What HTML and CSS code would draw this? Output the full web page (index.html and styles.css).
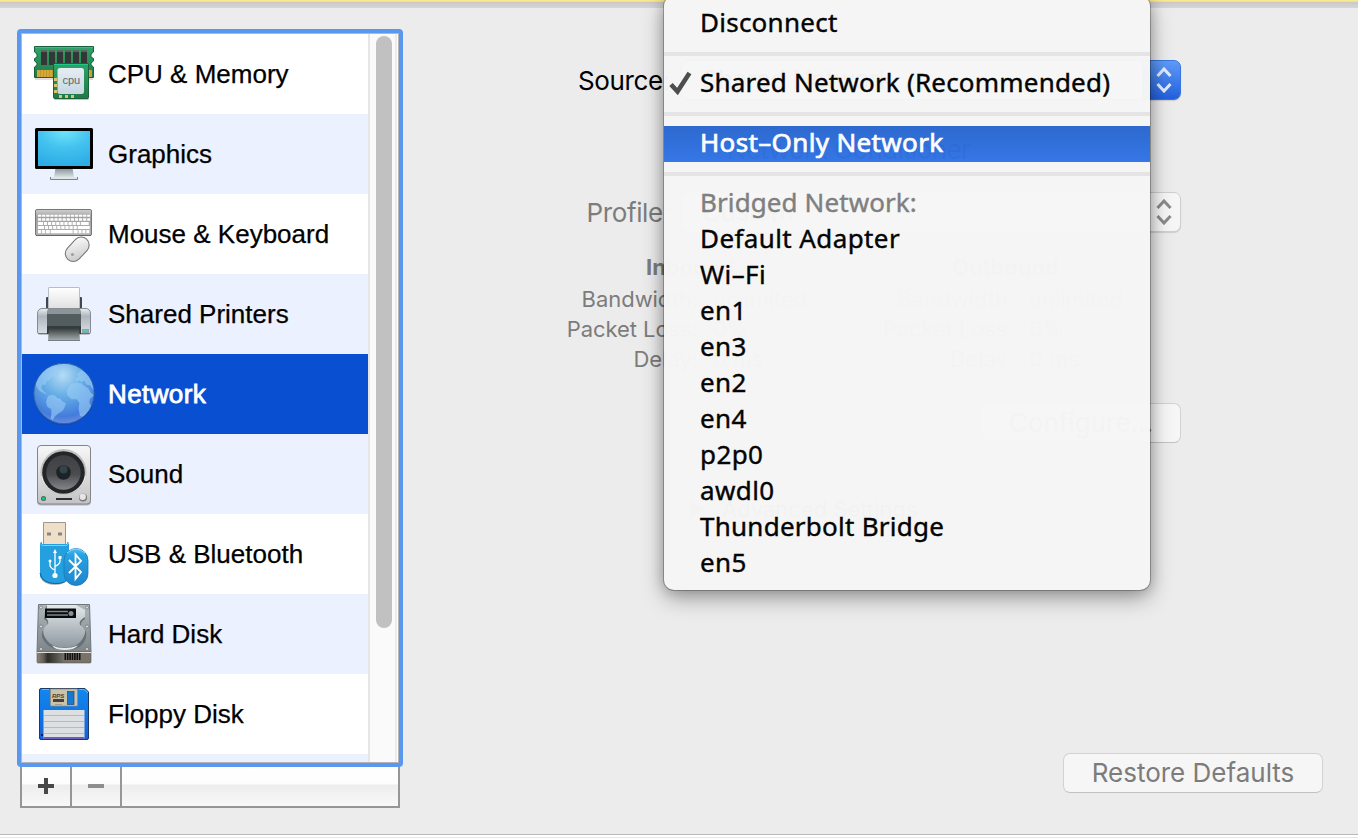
FILE: index.html
```html
<!DOCTYPE html>
<html lang="en">
<head>
<meta charset="utf-8">
<title>Hardware settings</title>
<link rel="stylesheet" href="styles.css">
</head>
<body>
<div class="window">
  <div class="banner-edge"></div>
  <div class="content">
    <aside class="sidebar">
      <div class="list-frame">
        <ul class="devices">
          <li class="device">
            <svg class="icon" viewBox="32 42 64 64">
              <defs>
                <linearGradient id="pcb" x1="0" y1="0" x2="0" y2="1"><stop offset="0" stop-color="#2fa468"/><stop offset="1" stop-color="#227849"/></linearGradient>
                <linearGradient id="chip" x1="0" y1="0" x2="0" y2="1"><stop offset="0" stop-color="#e6edf3"/><stop offset="1" stop-color="#c6d8e3"/></linearGradient>
              </defs>
              <path d="M35 79H93" stroke="#bbb" stroke-width="1"/>
              <path d="M34.5 46.500H93.500V52L91 54V57L93.500 58.500V61L91 63V65L93.500 67V77.500H34.500V67L37 65V63L34.500 61V58.500L37 57V54L34.500 52Z" fill="url(#pcb)" stroke="#17633c"/>
              <path d="M35 47.500H93" stroke="#21c887"/>
              <path d="M37 70H92V77H37Z" fill="#d6a936"/>
              <path d="M40.500 70V77M43.500 70V77M46.500 70V77M49.500 70V77M52.500 70V77M91 70V77" stroke="#a88c35" stroke-width=".6"/>
              <path d="M41 50h6v15h-6zM49 50h6v15h-6zM57 50h6v15h-6zM65 50h6v15h-6zM73 50h6v15h-6zM81 50h6v15h-6z" fill="#343638"/>
              <path d="M41 51h6M49 51h6M57 51h6M65 51h6M73 51h6M81 51h6" stroke="#707370" stroke-width="1.500"/>
              <rect x="54" y="65" width="35" height="35" rx="1.500" fill="#888" opacity=".5"/>
              <rect x="53.500" y="63.500" width="35" height="35" rx="1.500" fill="url(#pcb)" stroke="#17633c"/>
              <path d="M54 64.500H88" stroke="#21c887"/>
              <rect x="57.500" y="68" width="26.500" height="26" rx="2.500" fill="url(#chip)"/>
              <path d="M54 78h3v3h-3zM54 84h3v3h-3zM54 90h3v3h-3zM59 95h3v3h-3zM65 95h3v3h-3zM71 95h3v3h-3z" fill="#d8c66b"/>
              <text x="71.300" y="83.500" class="chip-text">cpu</text>
            </svg>
            <span>CPU &amp; Memory</span>
          </li>
          <li class="device">
            <svg class="icon" viewBox="32 122 64 64">
              <defs>
                <radialGradient id="screen" cx=".52" cy="0" r="1"><stop offset="0" stop-color="#6de5f8"/><stop offset=".5" stop-color="#43c1ef"/><stop offset="1" stop-color="#2dade5"/></radialGradient>
                <linearGradient id="stand" x1="0" y1="0" x2="0" y2="1"><stop offset="0" stop-color="#84908f"/><stop offset="1" stop-color="#dce4e8"/></linearGradient>
              </defs>
              <path d="M55.500 168H72.500L74 177.500H54Z" fill="url(#stand)"/>
              <path d="M50 177H78V180H50Z" fill="#dfe5e9"/>
              <path d="M50.500 177V179.500H77.500V177" fill="none" stroke="#7d8489"/>
              <rect x="35" y="128" width="58" height="41" rx="1.500"/>
              <rect x="38" y="131" width="52" height="35" fill="url(#screen)"/>
            </svg>
            <span>Graphics</span>
          </li>
          <li class="device">
            <svg class="icon" viewBox="32 202 64 64">
              <defs>
                <linearGradient id="kb" x1="0" y1="0" x2="0" y2="1"><stop offset="0" stop-color="#cfcfcf"/><stop offset=".3" stop-color="#a2a2a2"/><stop offset="1" stop-color="#b2b2b2"/></linearGradient>
                <linearGradient id="mouse" x1="0" y1="0" x2="1" y2="1"><stop offset="0" stop-color="#fff"/><stop offset="1" stop-color="#c5c5c5"/></linearGradient>
              </defs>
              <rect x="35.500" y="209.500" width="56" height="26" rx="1.500" fill="url(#kb)" stroke="#777"/>
              <path d="M36 235.500H91" stroke="#666"/>
              <g stroke="#fff" fill="none">
                <path d="M38 215.700H90" stroke-width="2" stroke-dasharray="3.300 .8"/>
                <path d="M38 219.500H90" stroke-width="2.600" stroke-dasharray="3.200 .9"/>
                <path d="M38 223.500H90" stroke-width="2.800" stroke-dasharray="5 .9 3.200 .9 3.200 .9 3.200 .9 3.200 .9 3.200 .9 3.200 .9 3.200 .9 3.200 .9 3.200 .9 8"/>
                <path d="M38 227.500H90" stroke-width="2.800" stroke-dasharray="6 .9 3.200 .9 3.200 .9 3.200 .9 3.200 .9 3.200 .9 3.200 .9 3.200 .9 3.200 .9 12"/>
                <path d="M38 231.700H90" stroke-width="3.200" stroke-dasharray="3 .9 3 .9 4 .9 22 .9 4 .9 3 .9 3 .9 3 1"/>
              </g>
              <rect x="69.200" y="235.500" width="16" height="27.500" rx="8" transform="rotate(43 77.200 249.300)" fill="url(#mouse)" stroke="#777" stroke-width="1.100"/>
              <circle cx="72.500" cy="254.500" r="1.600" fill="#a0a0a0"/>
            </svg>
            <span>Mouse &amp; Keyboard</span>
          </li>
          <li class="device">
            <svg class="icon" viewBox="32 282 64 64">
              <defs>
                <linearGradient id="pr" x1="0" y1="0" x2="0" y2="1"><stop offset="0" stop-color="#eef0f3"/><stop offset=".3" stop-color="#aeb6bd"/><stop offset="1" stop-color="#dde0e5"/></linearGradient>
                <linearGradient id="tray" x1="0" y1="0" x2="0" y2="1"><stop offset="0" stop-color="#343a3a"/><stop offset="1" stop-color="#aab3b6"/></linearGradient>
                <linearGradient id="paper" x1="0" y1="0" x2="0" y2="1"><stop offset="0" stop-color="#fff"/><stop offset="1" stop-color="#dedede"/></linearGradient>
              </defs>
              <path d="M46 298Q46 297 47 297H81Q82 297 82 298V310H46Z" fill="#40484c"/>
              <rect x="48.500" y="287.500" width="31" height="23" rx=".5" fill="url(#paper)" stroke="#b9bec4"/>
              <path d="M42 308.500H86Q90.500 309 90.500 314V332Q90.500 334 88.500 334H39.500Q37.500 334 37.500 332V314Q37.500 309 42 308.500Z" fill="url(#pr)" stroke="#858c93"/>
              <path d="M38 333.500H90" stroke="#727679"/>
              <path d="M48 309H80L81 314V326H47V314Z" fill="#535d60"/>
              <path d="M48 309H80L81 314H47Z" fill="#8b9699"/>
              <path d="M47 326H81V334H47Z" fill="#353b3c"/>
              <path d="M49 328H79L80 341H48Z" fill="url(#tray)"/>
              <path d="M48 340.500H80" stroke="#777f81"/>
              <path d="M82 329H89V333H82Z" fill="#8fa0a8"/><circle cx="84.300" cy="331" r="1.200" fill="#2fe5a3"/><circle cx="87.300" cy="331" r="1" fill="#5bc1ee"/>
            </svg>
            <span>Shared Printers</span>
          </li>
          <li class="device selected">
            <svg class="icon" viewBox="32 362 64 64">
              <defs>
                <radialGradient id="sea" cx=".48" cy=".2" r=".85"><stop offset="0" stop-color="#b7dcf5"/><stop offset=".4" stop-color="#67aee6"/><stop offset=".8" stop-color="#447ddc"/><stop offset="1" stop-color="#7d92e4"/></radialGradient>
                <clipPath id="disc"><circle cx="64" cy="393.500" r="30"/></clipPath>
              </defs>
              <circle cx="64" cy="394.500" r="30.500" fill="#173d8a" opacity=".5"/>
              <circle cx="64" cy="393.500" r="30.200" fill="url(#sea)" stroke="#2c62a6"/>
              <g clip-path="url(#disc)"><g transform="translate(20 350) scale(.33333)" fill="#9bcdf7" opacity=".6">
                <path d="M58 62L82 50L108 46L116 52L110 62L118 74L106 84L98 78L88 90L80 94L76 104L66 104L64 114L70 122L82 134L76 132L58 122L46 104L54 84L60 76Z"/>
                <path d="M84 138L94 134L104 136L112 144L122 146L126 154L138 160L134 172L128 182L116 190L104 200L98 210L92 206L94 192L94 178L82 170L78 156Z"/>
                <path d="M146 112L154 102L168 98L184 100L190 106L206 116L212 128L222 136L210 146L208 158L214 168L206 188L192 202L180 198L176 178L178 158L170 148L154 148L142 136L140 122Z"/>
                <path d="M166 88L176 80L172 72L184 60L204 74L218 96L222 122L210 106L200 104L194 92L184 96L178 90L170 96Z"/>
              </g></g>
            </svg>
            <span>Network</span>
          </li>
          <li class="device">
            <svg class="icon" viewBox="32 442 64 64">
              <defs>
                <linearGradient id="box" x1="0" y1="0" x2="0" y2="1"><stop offset="0" stop-color="#f7f7f7"/><stop offset="1" stop-color="#c3c3c5"/></linearGradient>
                <linearGradient id="cone" x1="0" y1="0" x2="0" y2="1"><stop offset="0" stop-color="#3f4044"/><stop offset=".55" stop-color="#4a4b4f"/><stop offset="1" stop-color="#85868a"/></linearGradient>
              </defs>
              <rect x="37" y="446.500" width="54" height="59" rx="4" fill="#777" opacity=".5"/>
              <rect x="37.500" y="445.500" width="53" height="58.500" rx="3.500" fill="url(#box)" stroke="#858588"/>
              <circle cx="63.500" cy="472" r="23" fill="#bfc0c1"/><path d="M41 476a23 23 0 0 0 45 0" fill="#ececec"/>
              <circle cx="63.500" cy="472.500" r="21.300" fill="#242528"/>
              <circle cx="63.500" cy="472.500" r="17.200" fill="url(#cone)"/>
              <circle cx="63.500" cy="472.500" r="7.300" fill="#1f2225"/><circle cx="63.500" cy="469.500" r="4" fill="#34424b"/>
              <circle cx="43.500" cy="498.500" r="2.500" fill="#48675a"/><circle cx="43.500" cy="498.500" r="1.500" fill="#05d67c"/>
              <path d="M56 499H72" stroke="#2d2e30" stroke-width="2"/>
              <circle cx="83" cy="497.500" r="4" fill="#777"/><circle cx="82.700" cy="496.800" r="3.200" fill="#e5e5e5"/>
            </svg>
            <span>Sound</span>
          </li>
          <li class="device">
            <svg class="icon" viewBox="32 522 64 64">
              <defs>
                <linearGradient id="blue" x1="0" y1="0" x2="0" y2="1"><stop offset="0" stop-color="#4cbaf0"/><stop offset=".2" stop-color="#27a0e0"/><stop offset="1" stop-color="#1d86cf"/></linearGradient>
              </defs>
              <path d="M40 545H69V577Q66 585 55 585T40 577Z" fill="#666" opacity=".5"/>
              <path d="M43.500 522.500H65.500V547H43.500Z" fill="#efdfc8" stroke="#9b978f"/>
              <path d="M47 532.500h4v3h-4zM58 532.500h4v3h-4z" fill="#858585"/>
              <path d="M40 544Q40 542 42 542V544H67V542Q69 542 69 544V576Q66 584 54.500 584T40 576Z" fill="#24a0e0"/>
              <path d="M40.500 544Q42 546.500 45 545.500H64Q67 546.500 68.500 543" fill="none" stroke="#6ed7fa"/>
              <path d="M40 573Q42 583 54.500 583.500T68 577" fill="none" stroke="#155f98"/>
              <g stroke="#fff" stroke-width="1.300" fill="none"><path d="M55 551V575M50 561V565Q50 568 55 570M60 557V561Q60 564 55 566.500"/></g>
              <path d="M55 549l2 4h-4zM58.500 556h3v3h-3z" fill="#fff"/><circle cx="50" cy="561" r="1.500" fill="#fff"/><circle cx="55" cy="575.500" r="2.600" fill="#fff"/>
              <rect x="64" y="548.500" width="24" height="37" rx="12" fill="url(#blue)" stroke="#1878b8" stroke-width=".8"/>
              <path d="M67 553Q76 545 85 553" fill="none" stroke="#83e0fd"/>
              <path d="M69 560L81 572L75.500 579V554.500L81 561L69 573" fill="none" stroke="#fff" stroke-width="1.800"/>
            </svg>
            <span>USB &amp; Bluetooth</span>
          </li>
          <li class="device">
            <svg class="icon" viewBox="32 602 64 64">
              <defs>
                <linearGradient id="metal" x1="0" y1="0" x2="0" y2="1"><stop offset="0" stop-color="#b1b7b9"/><stop offset="1" stop-color="#7d8589"/></linearGradient>
                <linearGradient id="platter" x1="0" y1="0" x2="0" y2="1"><stop offset="0" stop-color="#e4e9eb"/><stop offset=".5" stop-color="#b9c1c6"/><stop offset="1" stop-color="#8f989f"/></linearGradient>
                <linearGradient id="base" x1="0" y1="0" x2="1" y2="0"><stop offset="0" stop-color="#8b847b"/><stop offset=".12" stop-color="#645e57"/><stop offset=".2" stop-color="#2c2c2a"/><stop offset=".5" stop-color="#77716a"/><stop offset="1" stop-color="#79736b"/></linearGradient>
              </defs>
              <path d="M38.500 604.500H89.500L91 652H37Z" fill="url(#metal)" stroke="#70777a"/>
              <path d="M37 652H91V662Q91 663 90 663H38Q37 663 37 662Z" fill="url(#base)" stroke="#5c5852" stroke-width=".6"/>
              <path d="M37 652.500H91" stroke="#e4dfd5"/>
              <path d="M64.500 656.500H81" stroke="#111" stroke-width="7" stroke-dasharray="1.600 .8"/>
              <path d="M46 606H77L85 612V619Q80 622 81 626Q88 630 86 638C83 647 76 650 65 650S46 647 42 637Q41 630 47 626Q49 622 44 619Z" fill="#687177"/>
              <path d="M47 605H76L85 610V617Q78 621 80 625Q87 629 84.500 635C81 644 74 647.500 64.500 647.500S47 644 43.500 634Q42 628 48 624Q49 621 46 618Z" fill="url(#platter)"/>
              <path d="M52 645.500Q64 650.500 78 645.500Q74 650 64.500 650T52 645.500Z" fill="#e4e9eb"/>
              <rect x="45" y="608.500" width="31" height="9.500" rx=".5" fill="#080b0d"/>
              <path d="M47 611.500H68M47 615H68" stroke="#80868a" stroke-width="1.300"/><circle cx="71" cy="613.500" r="2.500" fill="#888e92"/>
              <g fill="#d9dcdd" stroke="#62686b" stroke-width=".6"><circle cx="41" cy="607.500" r="1.500"/><circle cx="87" cy="607.500" r="1.500"/><circle cx="41" cy="626.500" r="1.500"/><circle cx="87" cy="626.500" r="1.500"/><circle cx="41" cy="649" r="1.500"/><circle cx="87" cy="649" r="1.500"/></g>
            </svg>
            <span>Hard Disk</span>
          </li>
          <li class="device">
            <svg class="icon" viewBox="32 682 64 64">
              <defs><linearGradient id="flop" x1="0" y1="0" x2="0" y2="1"><stop offset="0" stop-color="#1188ee"/><stop offset="1" stop-color="#1561db"/></linearGradient></defs>
              <path d="M41 688.500H85L88.500 692V738Q88.500 739.500 87 739.500H41Q39.500 739.500 39.500 738V690Q39.500 688.500 41 688.500Z" fill="url(#flop)" stroke="#1e3866"/>
              <path d="M42 689.500H49M79 689.500H84L88 693" fill="none" stroke="#43c5f9"/>
              <path d="M50.500 689H77.500V706H50.500Z" fill="#cbc2a9" stroke="#958c74" stroke-width=".7"/>
              <rect x="67.500" y="691.500" width="6.500" height="13" fill="#1878d0" stroke="#0f4c93" stroke-width=".7"/>
              <text x="52" y="697.500" class="floppy-text">RPS</text>
              <path d="M53 700.500H64" stroke="#4a4034" stroke-width="3"/><path d="M55 704.500H62" stroke="#958c74" stroke-width=".7"/>
              <path d="M43.500 710H84.500V739H43.500Z" fill="#dce0e2"/>
              <path d="M44 715.500H84M44 721.500H84M44 727.500H84M44 733.500H84" stroke="#b5b8cb"/>
              <path d="M43.500 738H84.500" stroke="#6b5dc0" stroke-width="2"/><path d="M41 734h2v2h-2z" fill="#071a3d"/>
            </svg>
            <span>Floppy Disk</span>
          </li>
          <li class="device"></li>
        </ul>
        <div class="scrollbar"><div class="thumb"></div></div>
      </div>
      <div class="toolbar">
        <div class="tool"><svg width="16" height="16"><path d="M0 8H16M8 0V16" stroke="#484848" stroke-width="4"/></svg></div>
        <div class="tool"><svg width="16" height="16"><path d="M0 8H16" stroke="#8d8d8d" stroke-width="4"/></svg></div>
      </div>
    </aside>

    <main class="pane">
      <div class="field source">
        <label>Source:</label>
        <div class="select active"><span>Shared Network</span>
          <svg class="arrows" width="16" height="26"><path d="M1.500 9L8 2L14.500 9M1.500 17L8 24L14.500 17"/></svg></div>
      </div>
      <div class="conditioner">Network Conditioner</div>
      <div class="field profile">
        <label>Profile:</label>
        <div class="select"><span>Custom</span>
          <svg class="arrows" width="16" height="26"><path d="M1.500 9L8 2L14.500 9M1.500 17L8 24L14.500 17"/></svg></div>
      </div>
      <div class="limits">
        <div class="limit-group">
          <b>Inbound</b>
          <span class="key">Bandwidth:</span><span>unlimited</span>
          <span class="key">Packet Loss:</span><span>0%</span>
          <span class="key">Delay:</span><span>0 ms</span>
        </div>
        <div class="limit-group">
          <b>Outbound</b>
          <span class="key">Bandwidth:</span><span>unlimited</span>
          <span class="key">Packet Loss:</span><span>0%</span>
          <span class="key">Delay:</span><span>0 ms</span>
        </div>
      </div>
      <div class="button configure">Configure…</div>
      <div class="advanced"><svg width="16" height="18"><path d="M0 0L16 9L0 18Z" fill="#777"/></svg>Advanced Settings</div>
      <div class="button restore">Restore Defaults</div>
    </main>
  </div>
  <div class="bottom-edge"></div>

  <ul class="menu">
    <li class="item">Disconnect</li>
    <li class="rule"></li>
    <li class="item checked"><svg class="check" width="24" height="24"><path d="M3 13.500L9.500 20.500L21.500 2" fill="none" stroke="#4b4b4b" stroke-width="4.600"/></svg>Shared Network (Recommended)</li>
    <li class="rule"></li>
    <li class="item highlighted">Host–Only Network</li>
    <li class="rule"></li>
    <li class="item heading">Bridged Network:</li>
    <li class="item adapter">Default Adapter</li>
    <li class="item adapter">Wi–Fi</li>
    <li class="item adapter">en1</li>
    <li class="item adapter">en3</li>
    <li class="item adapter">en2</li>
    <li class="item adapter">en4</li>
    <li class="item adapter">p2p0</li>
    <li class="item adapter">awdl0</li>
    <li class="item">Thunderbolt Bridge</li>
    <li class="item adapter">en5</li>
  </ul>
</div>
</body>
</html>
```
FILE: styles.css
```css
* { box-sizing: border-box; }
body { margin: 0; background: #ececec; }
ul { list-style: none; margin: 0; padding: 0; }
svg { display: block; }

.window {
  position: relative;
  width: 1358px;
  height: 838px;
  overflow: hidden;
  display: flex;
  flex-direction: column;
}
.banner-edge {
  flex: none;
  height: 8px;
  background: linear-gradient(#fbe98c 0 1px, #f3e08a 1px 2px, #c9c9c9 2px, #d6d6d6 8px);
}
.content { flex: 1; display: flex; min-height: 0; }
.bottom-edge {
  flex: none;
  height: 4px;
  background: linear-gradient(#b9b9b9 0 1px, #fff 1px 3px, #e6e6e6 3px);
}

/* Device list */
.sidebar { flex: none; width: 403px; padding: 21px 0 0 17px; }
.list-frame {
  display: flex;
  width: 386px;
  height: 738px;
  border: 4px solid #5a98ef;
  border-radius: 4px;
  background: #fff;
  box-shadow: inset 1px 1px 0 #b4b9c1, inset -1px -1px 0 #b4b4b8;
  padding: 1px 2px 1px 1px;
}
.devices { width: 346px; overflow: hidden; }
.device {
  display: flex;
  align-items: center;
  gap: 12px;
  height: 80px;
  padding-left: 10px;
  font: 26px/30px "Liberation Sans", Arial, sans-serif;
  color: #000;
  -webkit-text-stroke: .25px;
}
.device:nth-child(even) { background: #ebf1fe; }
.device.selected { background: #0850d1; color: #fff; letter-spacing: .4px; -webkit-text-stroke: .8px; }
.icon { flex: none; width: 64px; height: 64px; letter-spacing: 0; -webkit-text-stroke: 0; }
.chip-text { font: 11px "Liberation Sans", sans-serif; fill: #596a70; text-anchor: middle; }
.floppy-text { font: italic bold 6px "Liberation Sans", sans-serif; fill: #4a4034; }
.scrollbar {
  flex: 1;
  padding: 2px 0 0 6px;
  background: #fafafa;
  border-left: 2px solid #e6e6e6;
  border-right: 2px solid #ebebeb;
}
.thumb { width: 16px; height: 592px; border-radius: 8px; background: #c1c1c1; }
.toolbar {
  display: flex;
  width: 380px;
  height: 41px;
  margin-left: 3px;
  border: 2px solid #969696;
  border-top: 0;
  background: linear-gradient(#fff 0, #fdfdfd 17px, #ededed 18px, #f8f8f8 39px);
}
.tool { width: 50px; padding: 11px 0 0 16px; border-right: 2px solid #969696; }

/* Settings pane */
.pane {
  flex: 1;
  display: flex;
  flex-direction: column;
  padding: 52px 35px 41px 0;
  font: 26px/40px Inter, sans-serif;
  letter-spacing: -.6px;
  color: #7c7c7c;
}
.field { display: flex; gap: 11px; height: 40px; }
.field label { width: 267px; text-align: right; line-height: 42px; letter-spacing: -.35px; }
.source label { color: #000; }
.select {
  display: flex;
  justify-content: space-between;
  align-items: center;
  width: 500px;
  padding: 0 8px 0 20px;
  border: 1px solid #cfcfcf;
  border-radius: 7px;
  background: #f6f6f6;
  box-shadow: 0 1px 1px #0002;
}
.select.active { color: #000; background: linear-gradient(90deg, #fff 460px, #0000 460px), linear-gradient(#5f9bf7, #2260dc); border-color: #3674e0; }
.arrows { fill: none; stroke: #8a8a8a; stroke-width: 3; }
.active .arrows { stroke: #e3ecff; }
.conditioner { height: 40px; margin: 30px 0 22px 324px; color: #000; }
.limits { display: flex; margin-top: 20px; font-size: 22px; line-height: 30px; letter-spacing: -.05px; }
.limit-group { display: grid; grid-template-columns: 295px auto; column-gap: 15px; align-content: start; width: 316px; }
.limit-group b { grid-column: 1 / -1; height: 32px; padding-left: 243px; }
.limit-group + .limit-group b { padding-left: 233px; }
.key { text-align: right; }
.button {
  height: 40px;
  border: 1px solid #d2d2d2;
  border-bottom-color: #c2c2c2;
  border-radius: 7px;
  background: #f6f6f6;
  text-align: center;
  line-height: 38px;
  letter-spacing: 0;
}
.configure { width: 200px; margin: 29px 0 0 578px; }
.advanced { display: flex; align-items: center; gap: 16px; margin: 46px 0 0 287px; font-size: 22px; letter-spacing: 0; color: #333; }
.restore { width: 260px; margin: auto 0 0 auto; }

/* Source pop-up */
.menu {
  position: absolute;
  left: 664px;
  top: -4px;
  width: 486px;
  height: 594px;
  padding-top: 10px;
  border-radius: 10px;
  background: #f6f6f6;
  opacity: .98;
  box-shadow: 0 0 0 1px #00000040, 0 8px 22px #00000059, 0 0 14px #0003;
  font: 26px/32px "Noto Sans", sans-serif;
  letter-spacing: .25px;
  color: #000;
  -webkit-text-stroke: .4px;
}
.item { display: flex; height: 36px; padding-left: 36px; white-space: pre; }
.adapter { letter-spacing: .4px; }
.checked { padding-left: 4px; letter-spacing: .2px; }
.check { width: 32px; margin-top: 5px; flex: none; }
.highlighted { color: #fff; letter-spacing: .35px; background: linear-gradient(#2a67cf, #3275e6); -webkit-text-stroke: .7px; }
.heading { color: #7d7d7d; letter-spacing: .1px; }
.rule { height: 4px; margin: 10px 0; background: #e4e4e4; }
```
